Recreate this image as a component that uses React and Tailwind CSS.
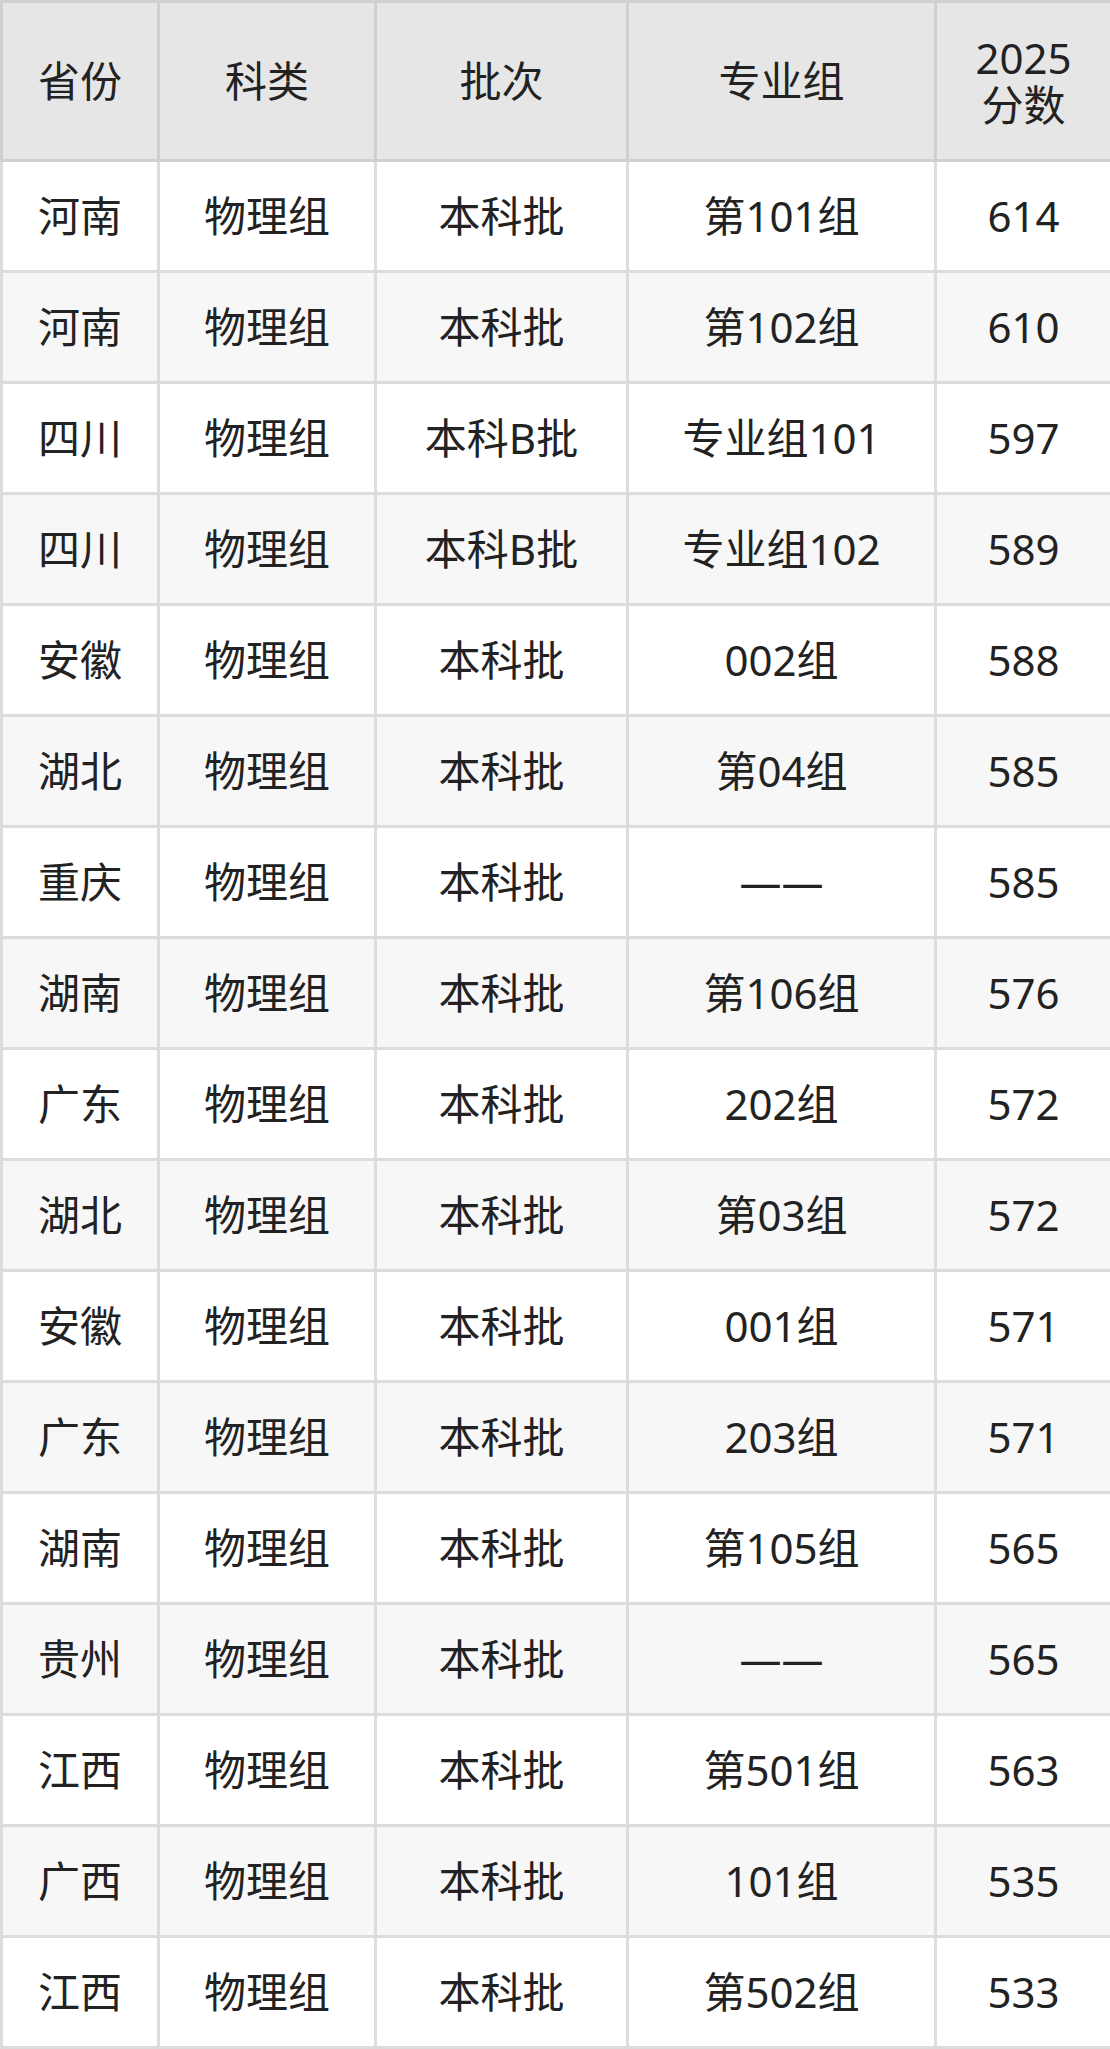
import React from 'react';

const rows = [
  ['河南', '物理组', '本科批', '第101组', '614'],
  ['河南', '物理组', '本科批', '第102组', '610'],
  ['四川', '物理组', '本科B批', '专业组101', '597'],
  ['四川', '物理组', '本科B批', '专业组102', '589'],
  ['安徽', '物理组', '本科批', '002组', '588'],
  ['湖北', '物理组', '本科批', '第04组', '585'],
  ['重庆', '物理组', '本科批', '——', '585'],
  ['湖南', '物理组', '本科批', '第106组', '576'],
  ['广东', '物理组', '本科批', '202组', '572'],
  ['湖北', '物理组', '本科批', '第03组', '572'],
  ['安徽', '物理组', '本科批', '001组', '571'],
  ['广东', '物理组', '本科批', '203组', '571'],
  ['湖南', '物理组', '本科批', '第105组', '565'],
  ['贵州', '物理组', '本科批', '——', '565'],
  ['江西', '物理组', '本科批', '第501组', '563'],
  ['广西', '物理组', '本科批', '101组', '535'],
  ['江西', '物理组', '本科批', '第502组', '533'],
];

const App = () => {
  return (
    <div className="w-[1110px] bg-white" style={{ fontFamily: '"Noto Sans", "Noto Sans CJK SC", sans-serif' }}>
      <table className="w-[1110px] table-fixed border-collapse text-[42px] leading-[1.15] text-[#222]">
        <colgroup>
          <col className="w-[157px]" />
          <col className="w-[217px]" />
          <col className="w-[252px]" />
          <col className="w-[308px]" />
          <col className="w-[176px]" />
        </colgroup>
        <thead>
          <tr className="h-[159px] bg-[#e6e6e6]">
            {['省份', '科类', '批次', '专业组'].map((h) => (
              <th key={h} className="border-[3px] border-[#d0d0d0] p-0 text-center font-normal">
                {h}
              </th>
            ))}
            <th className="border-[3px] border-[#d0d0d0] p-0 text-center font-normal leading-[1.12]">
              2025
              <br />
              分数
            </th>
          </tr>
        </thead>
        <tbody>
          {rows.map((r, i) => (
            <tr key={i} className={`h-[111px] ${i % 2 === 1 ? 'bg-[#f7f7f7]' : 'bg-white'}`}>
              {r.map((c, j) => (
                <td key={j} className="border-[3px] border-[#dcdcdc] p-0 text-center">
                  {c}
                </td>
              ))}
            </tr>
          ))}
        </tbody>
      </table>
    </div>
  );
};

export default App;
